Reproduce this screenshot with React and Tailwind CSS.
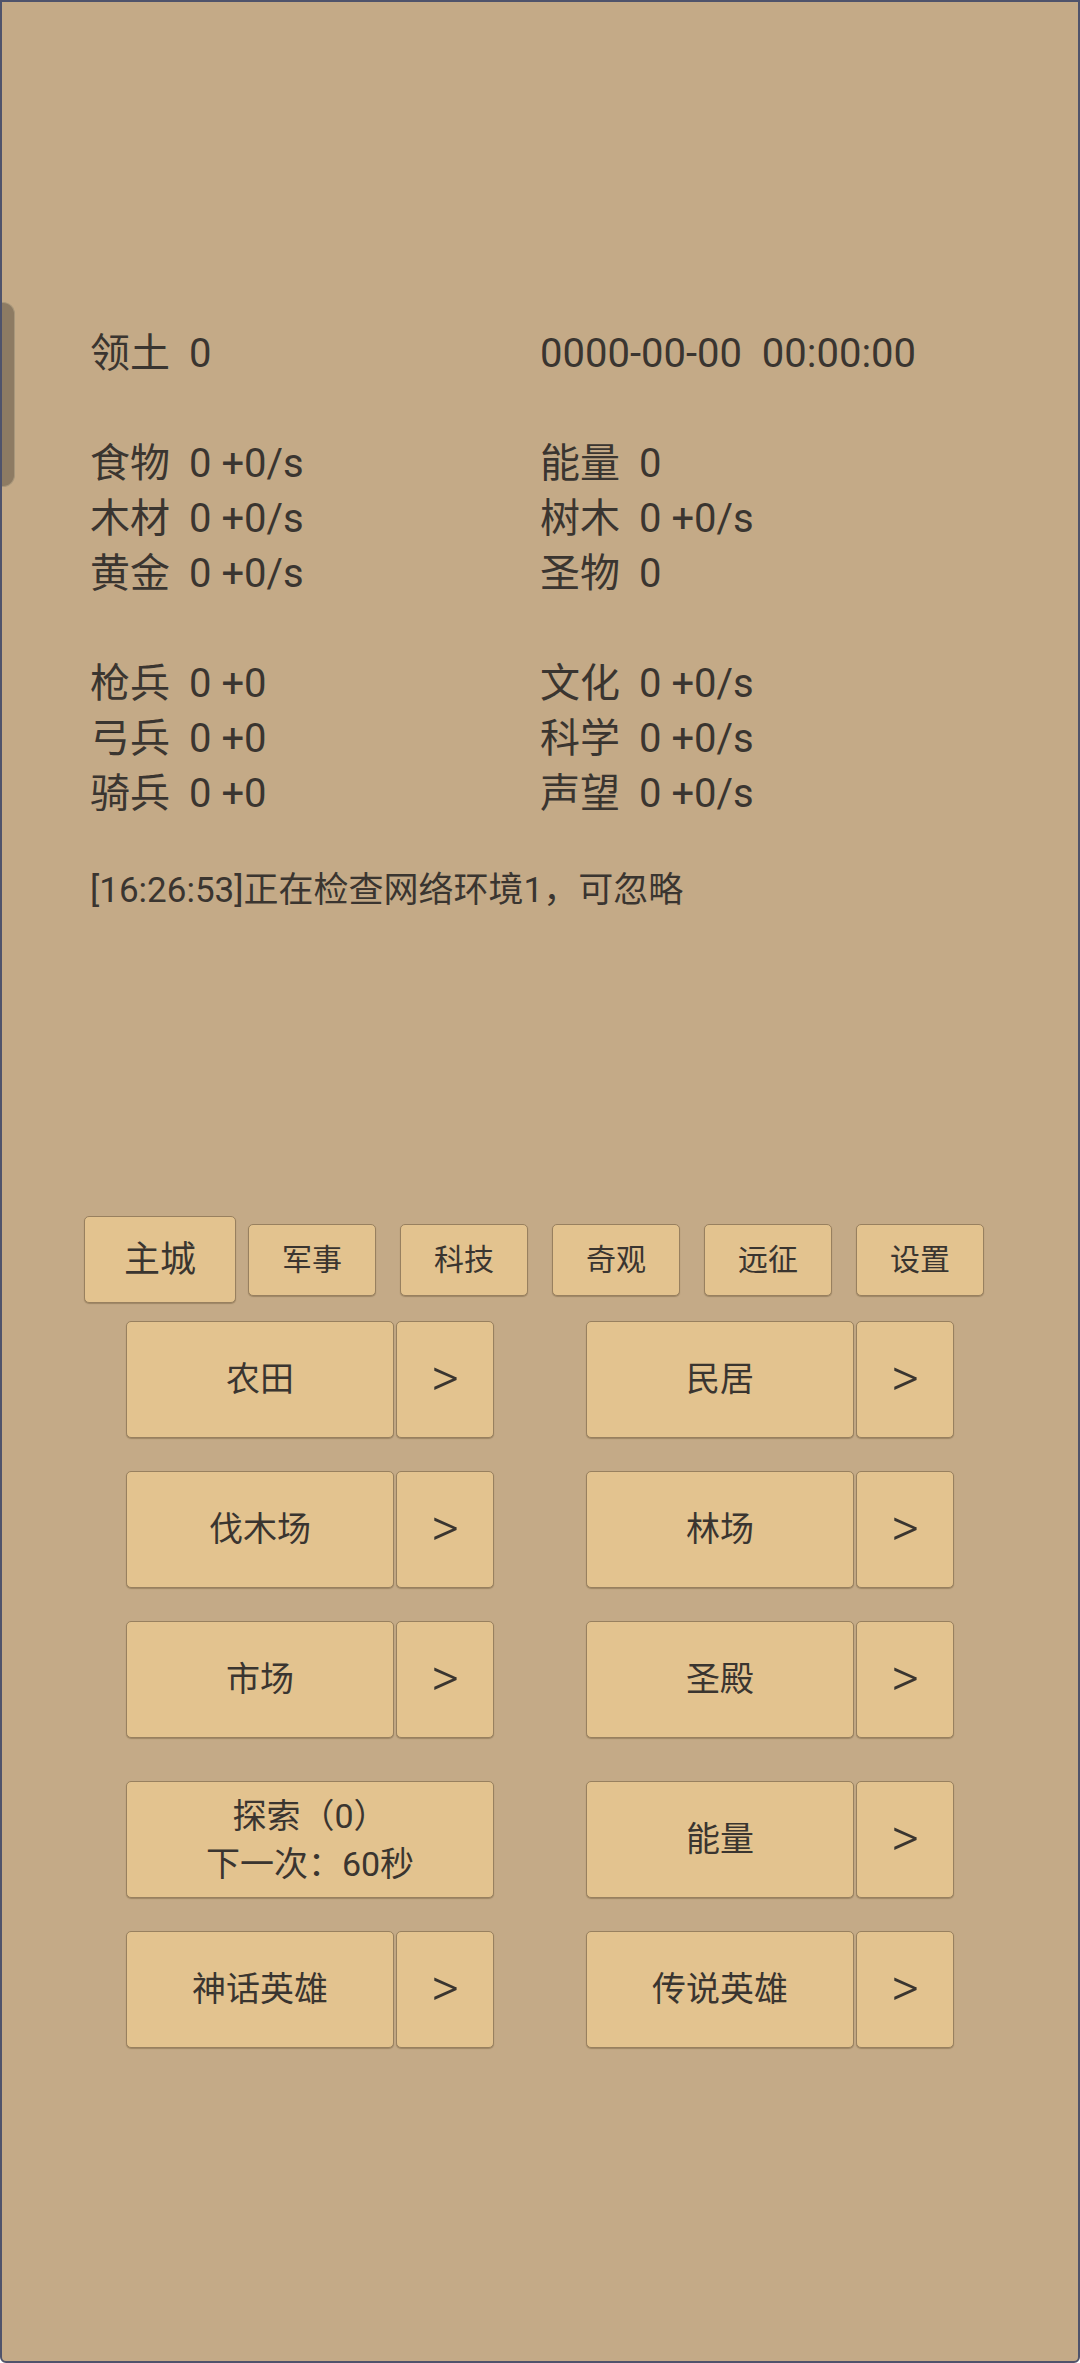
import React from "react";

const FONT = { fontFamily: 'Roboto, "Noto Sans CJK SC", sans-serif' };

const leftStats = [
  ["领土", "0"],
  null,
  ["食物", "0 +0/s"],
  ["木材", "0 +0/s"],
  ["黄金", "0 +0/s"],
  null,
  ["枪兵", "0 +0"],
  ["弓兵", "0 +0"],
  ["骑兵", "0 +0"],
];

const rightStats = [
  ["", "0000-00-00\u00a0\u00a000:00:00"],
  null,
  ["能量", "0"],
  ["树木", "0 +0/s"],
  ["圣物", "0"],
  null,
  ["文化", "0 +0/s"],
  ["科学", "0 +0/s"],
  ["声望", "0 +0/s"],
];

const tabs = ["主城", "军事", "科技", "奇观", "远征", "设置"];

const StatLine = ({ item }) => {
  if (!item) return <div className="h-[55px]" />;
  const [label, value] = item;
  return (
    <div className="h-[55px] leading-[55px] text-[40px] whitespace-nowrap">
      {label && <span>{label}</span>}
      <span className={label ? "ml-[19px]" : ""}>{value}</span>
    </div>
  );
};

const Btn = ({ children, className = "" }) => (
  <div
    className={`flex items-center justify-center bg-[#e3c38f] border-[1.5px] border-[#98805f] rounded-[5px] shadow-[0_1px_1px_rgba(90,70,40,0.35)] ${className}`}
  >
    {children}
  </div>
);

const Building = ({ name }) => (
  <div className="flex gap-[2px]">
    <Btn className="w-[268px] h-[117px] text-[34px]">{name}</Btn>
    <Btn className="w-[98px] h-[117px]">
      <span className="text-[54px] font-light leading-none pb-[4px]">&gt;</span>
    </Btn>
  </div>
);

export default function App() {
  return (
    <div
      className="relative w-[1080px] h-[2363px] bg-[#c4aa87] border-2 border-[#4f536b] rounded-b-[6px] text-[#3a3530] overflow-hidden"
      style={FONT}
    >
      {/* side handle */}
      <div className="absolute left-0 top-[300px] w-[13px] h-[185px] bg-[#8d7b63] rounded-r-[12px] border-r border-y border-[#a8977b]" />

      <div className="pt-[324px] px-[88px]">
        <div className="grid grid-cols-2">
          <div>
            {leftStats.map((s, i) => (
              <StatLine key={i} item={s} />
            ))}
          </div>
          <div>
            {rightStats.map((s, i) => (
              <StatLine key={i} item={s} />
            ))}
          </div>
        </div>
        <div className="mt-[42px] h-[55px] leading-[55px] text-[35px] whitespace-nowrap">
          [16:26:53]正在检查网络环境1，可忽略
        </div>
      </div>

      {/* tabs */}
      <div className="mt-[298px] ml-[82px] flex h-[87px] items-center">
        {tabs.map((t, i) => (
          <div key={t} className="w-[152px] flex justify-center">
            {i === 0 ? (
              <Btn className="w-[152px] h-[87px] text-[36px]">{t}</Btn>
            ) : (
              <Btn className="w-[128px] h-[72px] text-[30px]">{t}</Btn>
            )}
          </div>
        ))}
      </div>

      {/* buildings */}
      <div className="mt-[18px] px-[124px] flex flex-col">
        <div className="flex justify-between">
          <Building name="农田" />
          <Building name="民居" />
        </div>
        <div className="mt-[33px] flex justify-between">
          <Building name="伐木场" />
          <Building name="林场" />
        </div>
        <div className="mt-[33px] flex justify-between">
          <Building name="市场" />
          <Building name="圣殿" />
        </div>
        <div className="mt-[43px] flex justify-between">
          <Btn className="w-[368px] h-[117px] flex-col text-[34px] leading-[48px]">
            <span>探索（0）</span>
            <span>下一次：60秒</span>
          </Btn>
          <Building name="能量" />
        </div>
        <div className="mt-[33px] flex justify-between">
          <Building name="神话英雄" />
          <Building name="传说英雄" />
        </div>
      </div>
    </div>
  );
}
